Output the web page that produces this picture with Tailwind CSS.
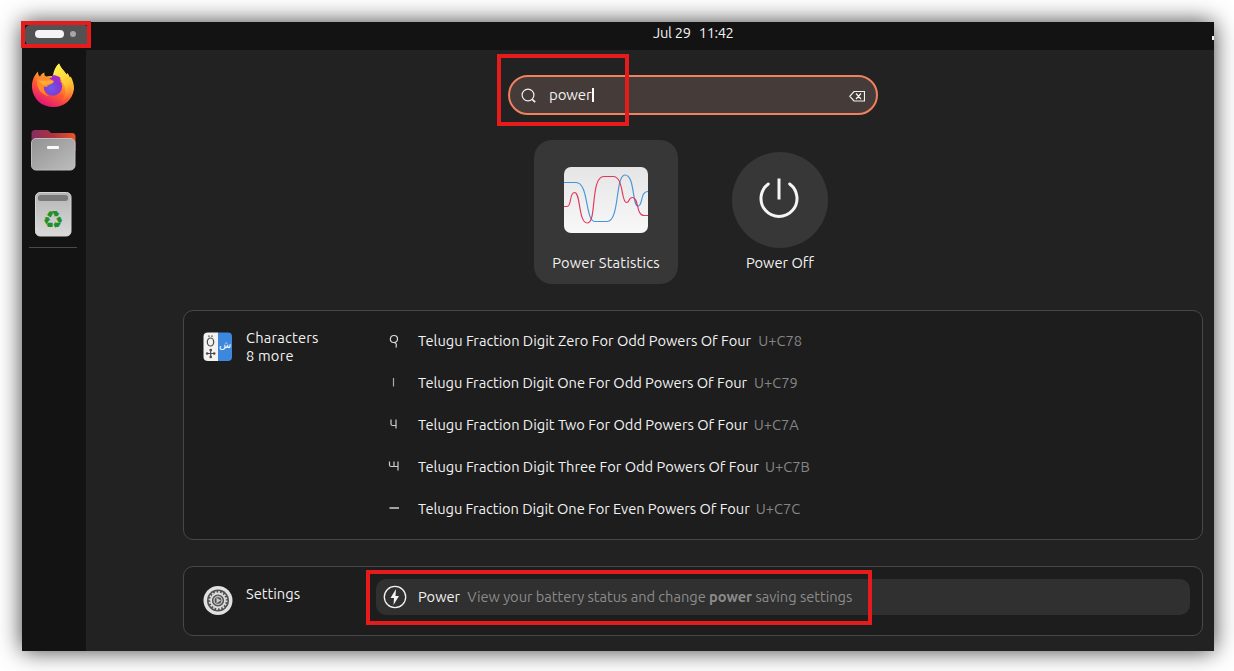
<!DOCTYPE html>
<html lang="en">
<head>
<meta charset="utf-8">
<title>Activities overview</title>
<script src="https://cdn.jsdelivr.net/npm/@tailwindcss/browser@4"></script>
</head>
<body class="relative h-[671px] w-[1234px] overflow-hidden bg-white pt-[22px] pl-[22px] font-['Ubuntu','Noto_Sans',sans-serif] text-[14.667px] leading-[18px] text-[#f2f2f2]">
<div class="flex h-[629px] w-[1192px] flex-col bg-[#222222] shadow-[0_0_22px_rgba(0,0,0,0.75)]">
  <header class="relative flex h-7 shrink-0 items-center bg-[#131313]">
    <div class="flex h-[20px] w-[64px] items-center gap-[6px] rounded-[5px] bg-[#525252] pb-[2px] pl-[10px] ml-[3px] -mt-[3px]">
      <span class="h-2 w-[29px] rounded-full bg-[#f4f4f4]"></span>
      <span class="size-[6px] rounded-full bg-[#a6a6a6]"></span>
    </div>
    <div class="ml-[564px] -mt-[6px] flex gap-[8px] whitespace-nowrap"><span class="tracking-[-0.25px]">Jul 29</span><span class="tracking-[-0.4px]">11:42</span></div>
    <span class="absolute top-[14px] right-0 h-1 w-[2px] bg-[#f2f2f2]"></span>
  </header>
  <div class="flex flex-1">
    <nav class="flex w-16 flex-col items-center bg-[#131313] pt-[12px] pr-[2px]">
      <svg class="h-[48px] w-[48px]" viewBox="0 0 48 48">
        <defs>
          <linearGradient id="ff" x1=".8" y1=".05" x2=".3" y2="1"><stop offset="0" stop-color="#fff14a"/><stop offset=".32" stop-color="#ffb52d"/><stop offset=".62" stop-color="#ff5a33"/><stop offset="1" stop-color="#e0107c"/></linearGradient>
          <linearGradient id="fy" x1=".3" y1="0" x2=".7" y2="1"><stop offset="0" stop-color="#fff44f"/><stop offset=".6" stop-color="#ffcb35"/><stop offset="1" stop-color="#ff8430" stop-opacity="0.2"/></linearGradient>
          <radialGradient id="fp" cx=".4" cy=".6" r=".65"><stop offset="0" stop-color="#6b5be8"/><stop offset=".6" stop-color="#7c3ed8"/><stop offset="1" stop-color="#a726c9"/></radialGradient>
        </defs>
        <path d="M9 9.500C9 12 9.500 13.500 11 14.500C12 12 14 11 15.500 10.500C15 12.500 15.500 13.500 17 14.500C20 13.500 22.500 14 24 14C25 8 27 4 30 1.500C32 6 35 9 37.500 12.500L38.500 11C40 13 40.500 14.500 41 15.500L41.800 14.500C44 19 45.200 23 45 27C43.500 38 35 45 24.500 45C12.500 45 4 37 3 26C2.600 20 4.500 14 9 9.500Z" fill="url(#ff)"/>
        <path d="M24 14C25 8 27 4 30 1.500C32 7 38 11 40.500 17C44 25 41 36 33 39C39 32 37 22 31 18C28 15 26 14 24 14Z" fill="url(#fy)"/>
        <circle cx="24" cy="24.500" r="9.200" fill="url(#fp)"/>
        <path d="M23 13.300C28 12.500 32 16 32 16C30 16.500 31.500 17.500 33 19C29 17.500 26 18 23 16Z" fill="#a52bc9"/>
        <path d="M8 17C12 13.500 17 14 20 16C22 18 24 18 25 19.500C24 22 20 22.500 18.500 24C17.500 26 14.500 24 14.500 25C15 31 18 33 20 34C13 33 7 27 8 17Z" fill="#ff8b2b"/>
        <path d="M9 18C13 19.500 17 18 21 18.500C23 19 24 19 24.500 20C22 21.500 19 21.500 17 23C14 23 11 21 9 18Z" fill="#ffad36"/>
      </svg>
      <svg class="mt-[16px] h-[48px] w-[48px]" viewBox="0 0 48 48">
        <defs><linearGradient id="fo"><stop offset="0" stop-color="#842e60"/><stop offset=".5" stop-color="#ae3340"/><stop offset="1" stop-color="#ec5528"/></linearGradient>
        <linearGradient id="fg" x1="0" y1="0" x2="1" y2="1"><stop offset="0" stop-color="#929292"/><stop offset="1" stop-color="#bdbdbd"/></linearGradient></defs>
        <path d="M2.500 7.500Q2.500 4 6 4H18Q19.500 4 20.500 5.500L22 7H43Q46.500 7 46.500 10.500V25H2.500Z" fill="url(#fo)"/>
        <rect x="2.500" y="12.500" width="43.500" height="31.500" rx="4.500" fill="url(#fg)" stroke="#bebebe"/>
        <rect x="18" y="20" width="12" height="3" rx="1" fill="#fafafa"/>
      </svg>
      <svg class="mt-[16px] h-[48px] w-[48px]" viewBox="0 0 48 48">
        <defs><linearGradient id="tg" x1="0" y1="0" x2="0" y2="1"><stop offset="0" stop-color="#b5b5b5"/><stop offset="1" stop-color="#dadada"/></linearGradient></defs>
        <rect x="6.500" y="2.500" width="35.500" height="43.500" rx="4.500" fill="url(#tg)" stroke="#d6d6d6"/>
        <rect x="9" y="5" width="30" height="6" rx="2.500" fill="#7a7a7a"/>
        <text x="24" y="38" text-anchor="middle" font-family="DejaVu Sans" font-size="24" fill="#1f9023">&#x267B;&#xFE0E;</text>
      </svg>
      <div class="mt-[9px] h-px w-12 bg-[#494949]"></div>
    </nav>
    <main class="flex flex-col pt-[25px] pl-[97px]">
      <div class="flex h-10 w-[370px] items-center self-center rounded-full border-2 border-[#ef815e] bg-[#453b38] pr-[11px] pl-[11px]">
        <svg class="size-4" viewBox="0 0 16 16" fill="none" stroke="#f2f2f2" stroke-width="1.200"><circle cx="7" cy="8" r="5.900"/><path d="M11.200 12.300l3 2.800" stroke-width="1.700"/></svg>
        <span class="ml-[12px] text-[15px] tracking-[-0.1px]">power</span><span class="h-[14px] w-[2px] bg-white"></span>
        <svg class="mt-[1px] ml-auto size-4" viewBox="0 0 16 16" fill="none" stroke="#f2f2f2" stroke-width="1.200"><path d="M5 3.500h10.500v9.500H5L.700 8.250ZM7 5.500l5 5.500M12 5.500l-5 5.500"/></svg>
      </div>
      <div class="mt-[25px] flex gap-[30px] self-center">
        <div class="flex h-36 w-36 flex-col items-center rounded-[18px] bg-[#373737] pt-[27px]">
          <svg class="h-[66px] w-[84px]" viewBox="0 0 84 66">
            <defs><linearGradient id="pg" x1="0" y1="0" x2="0" y2="1"><stop offset="0" stop-color="#e5e5e5"/><stop offset="1" stop-color="#f8f8f8"/></linearGradient></defs>
            <rect width="84" height="66" rx="7" fill="url(#pg)"/>
            <g fill="none" stroke-width="1.150"><path d="M0 15.500H12C25 15.500 21 54.500 31 54.500H43C56 54.500 51 8 61 8C71 8 68 39 74 39C79 39 76 24.500 84 24.500" stroke="#4396dc"/>
            <path d="M0 39.500H3C8 39.500 5 25.500 10.500 25.500C17 25.500 14 56 23.500 56C33 56 26 9.500 40 9.500H49C60 9.500 57 35.500 62.500 35.500C66 35.500 64 30.500 68.500 30.500C75 30.500 72 48.500 80 48.500H84" stroke="#e1375a"/></g>
          </svg>
          <span class="mt-[21px] whitespace-nowrap tracking-[0.18px]">Power Statistics</span>
        </div>
        <div class="flex h-36 w-36 flex-col items-center pt-3">
          <div class="flex size-24 items-center justify-center rounded-full bg-[#373737]">
            <svg class="-mt-[4px] -ml-[3px] size-12" viewBox="0 0 48 48" fill="none" stroke="#f5f5f5" stroke-width="3"><path d="M13.300 10A18 18 0 1 0 34.700 10" stroke-linecap="round"/><path d="M24 4.500v21"/></svg>
          </div>
          <span class="mt-[6px] whitespace-nowrap">Power Off</span>
        </div>
      </div>
      <section class="mt-[26px] flex h-[230px] w-[1020px] rounded-[10px] border border-[#484848] bg-[#1d1d1d] py-3 pr-3 pl-[19px]">
        <svg class="mt-[8px] h-[31px] w-[30px] shrink-0" viewBox="0 0 30 31">
          <path d="M15 1.500H5Q.5 1.500 .5 5.500V26Q.5 30 5 30H15Z" fill="#f3f2f0"/><path d="M15 1.500H25Q29 1.500 29 5.500V26Q29 30 25 30H15Z" fill="#3d87de"/>
          <g fill="none" stroke="#4a4a4a" stroke-width="1.200"><ellipse cx="7.500" cy="11" rx="3.200" ry="4"/><path d="M5.200 5.200h1.500M8.300 5.200h1.500"/><path d="M3.500 22.500H12M7.700 18.300V26.500"/></g>
          <g fill="#4a4a4a"><circle cx="7.700" cy="19" r="1.300"/><circle cx="7.700" cy="26" r="1.300"/><circle cx="4.200" cy="22.500" r="1.300"/><circle cx="11.200" cy="22.500" r="1.300"/></g>
          <text x="22" y="17" text-anchor="middle" font-size="10" fill="#fff" font-family="DejaVu Sans">ش</text>
        </svg>
        <div class="mt-[6px] ml-[13px] w-[130px] shrink-0 leading-[18px] tracking-[0.2px]">Characters<br>8 more</div>
        <div class="flex flex-1 flex-col gap-[6px]">
          <div class="flex h-9 items-center whitespace-nowrap"><svg class="ml-[10px] size-4" viewBox="0 0 16 16" fill="none" stroke="#ddd" stroke-width="1.200"><path d="M7.500 9.500C3 9.500 3.500 2.500 8 2.500S13 9.500 7.500 9.500C10 9.500 11 11 10 14.500"/></svg><span class="ml-[16px]">Telugu Fraction Digit Zero For Odd Powers Of Four</span><span class="ml-[7px] text-[#858585]">U+C78</span></div>
          <div class="flex h-9 items-center whitespace-nowrap"><svg class="ml-[10px] size-4" viewBox="0 0 16 16" fill="none" stroke="#aaa" stroke-width="1.200"><path d="M7.500 3v8.500"/></svg><span class="ml-[16px] tracking-[-0.03px]">Telugu Fraction Digit One For Odd Powers Of Four</span><span class="ml-[7px] text-[#858585]">U+C79</span></div>
          <div class="flex h-9 items-center whitespace-nowrap"><svg class="ml-[10px] size-4" viewBox="0 0 16 16" fill="none" stroke="#ccc" stroke-width="1.200"><path d="M5 2.500v4.500q0 1.500 1.500 1.500H10M10 2.500v9"/></svg><span class="ml-[16px]">Telugu Fraction Digit Two For Odd Powers Of Four</span><span class="ml-[6px] text-[#858585]">U+C7A</span></div>
          <div class="flex h-9 items-center whitespace-nowrap"><svg class="ml-[10px] size-4" viewBox="0 0 16 16" fill="none" stroke="#ccc" stroke-width="1.200"><path d="M3.500 2.500v3.500q0 1.500 1.500 1.500H12M8 2.500v5M12 2.500v9"/></svg><span class="ml-[16px]">Telugu Fraction Digit Three For Odd Powers Of Four</span><span class="ml-[6px] text-[#858585]">U+C7B</span></div>
          <div class="flex h-9 items-center whitespace-nowrap"><svg class="ml-[10px] size-4" viewBox="0 0 16 16" fill="none" stroke="#ddd" stroke-width="1.400"><path d="M3.500 7H13"/></svg><span class="ml-[16px] tracking-[-0.04px]">Telugu Fraction Digit One For Even Powers Of Four</span><span class="ml-[6px] text-[#858585]">U+C7C</span></div>
        </div>
      </section>
      <section class="mt-[26px] flex h-[70px] w-[1020px] rounded-[10px] border border-[#484848] bg-[#1d1d1d] pt-3 pr-3 pl-[19px]">
        <svg class="mt-[6px] size-[30px] shrink-0" viewBox="0 0 30 30" fill="none">
          <circle cx="15" cy="15.500" r="14.500" fill="#e1e1e1"/><circle cx="15" cy="15.500" r="11" fill="#505050"/>
          <circle cx="15" cy="15.500" r="7" stroke="#ddd" stroke-width="1.800"/><circle cx="15" cy="15.500" r="8.500" stroke="#ddd" stroke-width="1.800" stroke-dasharray="1.700 1.638"/>
          <circle cx="15" cy="15.500" r="4" stroke="#bcbcbc" stroke-width="1.500"/><path d="M13.500 12.700l4.500 2.800l-4.500 2.800Z" fill="#ccc"/>
        </svg>
        <div class="mt-[6px] ml-[13px] w-[130px] shrink-0">Settings</div>
        <div class="flex h-9 flex-1 items-center rounded-[10px] bg-[#303030] whitespace-nowrap">
          <svg class="-mt-[1px] ml-[7px] size-[24px]" viewBox="0 0 24 24"><circle cx="12" cy="12" r="10.700" fill="none" stroke="#f2f2f2" stroke-width="1.300"/><path d="M13 4L7.500 13H11L10.500 20L16 11H12.500Z" fill="#f2f2f2"/></svg>
          <span class="ml-[11px]">Power</span><span class="ml-[7px] tracking-[-0.04px] text-[#8b8b8b]">View your battery status and change <b>power</b> saving settings</span>
        </div>
      </section>
    </main>
  </div>
</div>
<!-- callout frames over the window -->
<div class="absolute top-[21px] left-[21px] h-[27px] w-[70px] border-4 border-[#e61b1b]"></div>
<div class="absolute top-[54px] left-[497px] h-[72px] w-[132px] border-4 border-[#e61b1b]"></div>
<div class="absolute top-[570px] left-[366px] h-[55px] w-[506px] border-4 border-[#e61b1b]"></div>
</body>
</html>
